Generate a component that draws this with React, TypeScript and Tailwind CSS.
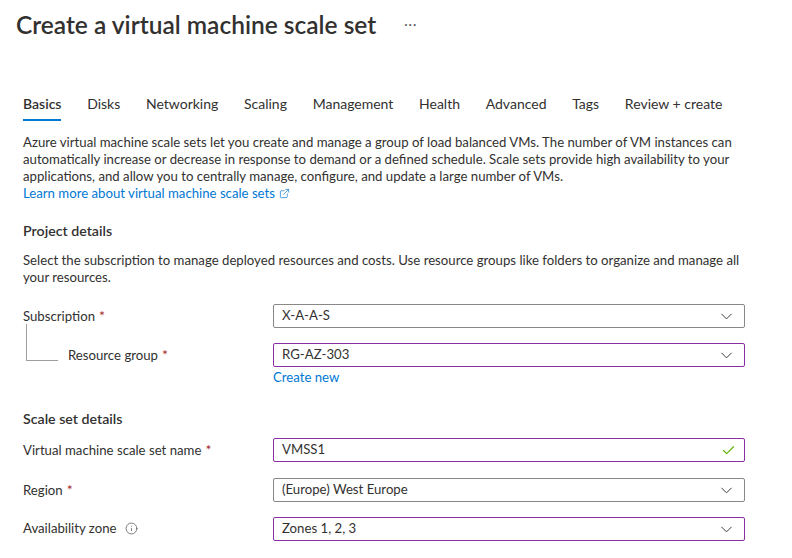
import { ChevronDown, Check, Info, ExternalLink } from "lucide-react";

const tabs = [
  "Basics",
  "Disks",
  "Networking",
  "Scaling",
  "Management",
  "Health",
  "Advanced",
  "Tags",
  "Review + create",
];

const Req = () => <span className="ml-1 text-[14px] text-[#a4262c]">*</span>;

const Field = ({
  value,
  purple,
  valid,
}: {
  value: string;
  purple?: boolean;
  valid?: boolean;
}) => (
  <div
    className={`flex h-[24px] w-[472px] items-center justify-between rounded-[2px] border pl-[8px] pr-[8px] ${
      purple ? "border-[#8a2da5]" : "border-[#8a8886]"
    }`}
  >
    <span className="text-[13.2px] text-[#323130]">{value}</span>
    {valid ? (
      <Check className="h-[15px] w-[15px] text-[#5db300]" strokeWidth={1.8} />
    ) : (
      <ChevronDown className="h-[19px] w-[19px] text-[#323130]" strokeWidth={1.2} />
    )}
  </div>
);

export default function App() {
  return (
    <div className="min-h-screen bg-white font-['Lato','Open_Sans',sans-serif] text-[#323130]">
      {/* header */}
      <div className="flex items-center pl-[16px] pt-[8px]">
        <h1 className="text-[24.5px] font-semibold leading-[34px] text-[#323130]">
          Create a virtual machine scale set
        </h1>
        <span className="ml-[28px] text-[13px] tracking-[1px] text-[#605e5c]">···</span>
      </div>

      {/* tabs */}
      <div className="mt-[52px] flex gap-[25.7px] pl-[23px] text-[14px]">
        {tabs.map((t, i) => (
          <div key={t} className="flex flex-col">
            <span className={`leading-[20px] ${i === 0 ? "font-semibold" : ""}`}>{t}</span>
            <div className={`mt-[5px] h-[2px] ${i === 0 ? "bg-[#0078d4]" : ""}`} />
          </div>
        ))}
      </div>

      <div className="pl-[23px] pr-[40px] text-[13.2px]">
        <p className="mt-[13px] leading-[17px]">
          Azure virtual machine scale sets let you create and manage a group of load balanced VMs. The number of VM
          instances can automatically increase or decrease in response to demand or a defined schedule. Scale sets
          provide high availability to your applications, and allow you to centrally manage, configure, and update a
          large number of VMs.
        </p>
        <a className="flex items-center gap-[4px] leading-[17px] text-[#0078d4]">
          Learn more about virtual machine scale sets
          <ExternalLink className="h-[11px] w-[11px]" strokeWidth={1.5} />
        </a>

        <h2 className="mt-[19px] text-[14.2px] font-semibold leading-[20px]">Project details</h2>
        <p className="mt-[11px] leading-[17px]">
          Select the subscription to manage deployed resources and costs. Use resource groups like folders to organize
          and manage all your resources.
        </p>

        <div className="mt-[18px] flex items-center">
          <span className="w-[250px]">
            Subscription
            <Req />
          </span>
          <Field value="X-A-A-S" />
        </div>

        <div className="mt-[15px] flex items-center">
          <div className="relative w-[250px] pl-[45px]">
            <div className="absolute bottom-[5px] left-[3px] top-[-20px] w-[32px] border-b border-l border-[#a19f9d]" />
            Resource group
            <Req />
          </div>
          <Field value="RG-AZ-303" purple />
        </div>
        <a className="ml-[250px] mt-[2px] block leading-[17px] text-[#0078d4]">Create new</a>

        <h2 className="mt-[23px] text-[14.2px] font-semibold leading-[20px]">Scale set details</h2>

        <div className="mt-[9px] flex items-center">
          <span className="w-[250px]">
            Virtual machine scale set name
            <Req />
          </span>
          <Field value="VMSS1" purple valid />
        </div>

        <div className="mt-[16px] flex items-center">
          <span className="w-[250px]">
            Region
            <Req />
          </span>
          <Field value="(Europe) West Europe" />
        </div>

        <div className="mt-[15px] flex items-center">
          <span className="flex w-[250px] items-center">
            Availability zone
            <Info className="ml-[8px] h-[13px] w-[13px] text-[#605e5c]" strokeWidth={1.5} />
          </span>
          <Field value="Zones 1, 2, 3" purple />
        </div>
      </div>
    </div>
  );
}
